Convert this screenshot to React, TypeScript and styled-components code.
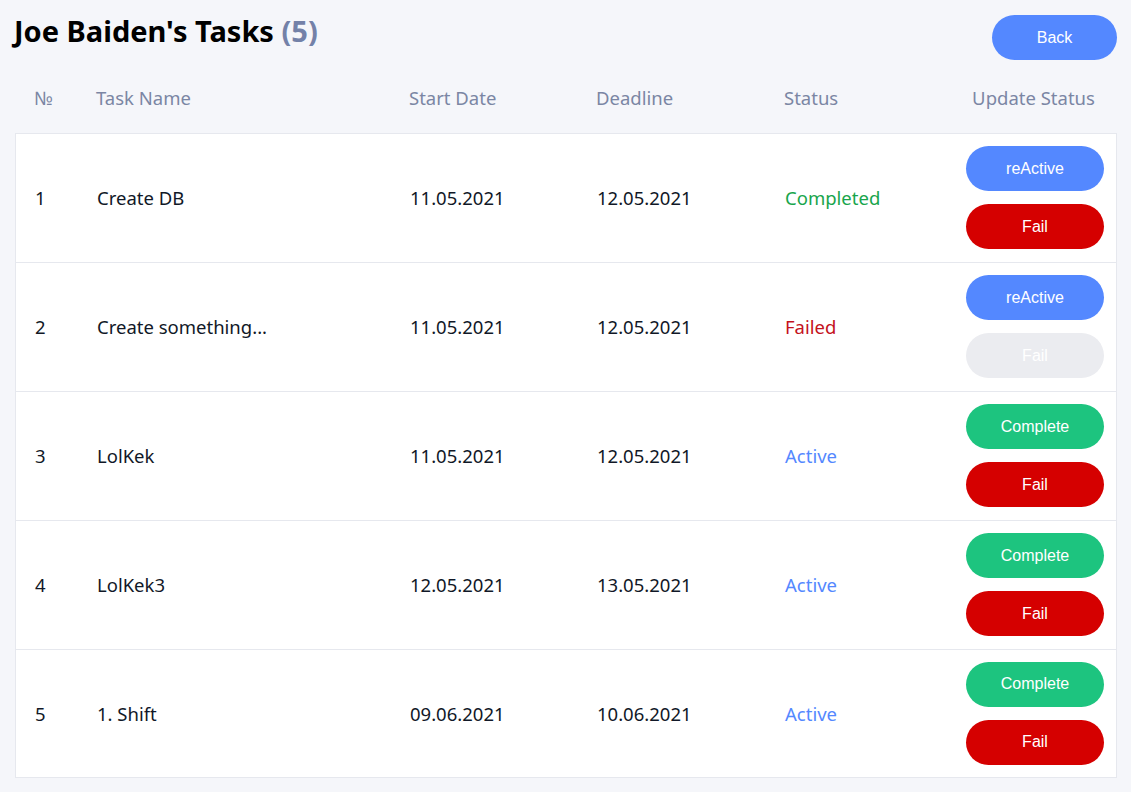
import React from "react";
import styled, { createGlobalStyle } from "styled-components";

const GlobalStyle = createGlobalStyle`
  html, body { margin: 0; padding: 0; background: #f5f6fa; }
  body { font-family: "Noto Sans", "Open Sans", sans-serif; }
  * { box-sizing: border-box; }
`;

const Page = styled.div`
  padding: 15px 14px 14px 15px;
  background: #f5f6fa;
  min-height: 792px;
`;

const TopBar = styled.div`
  display: flex;
  justify-content: space-between;
  align-items: flex-start;
  height: 45px;
`;

const Title = styled.h1`
  margin: -4px 0 0 -1px;
  font-family: "Noto Sans", sans-serif;
  font-size: 29px;
  font-weight: 700;
  color: #000;
  line-height: 40px;
`;

const Count = styled.span`
  color: #7381a8;
`;

const PillButton = styled.button<{ $variant: "blue" | "green" | "red" | "disabled" }>`
  height: 45px;
  border: none;
  border-radius: 23px;
  font-family: "Liberation Sans", Arial, sans-serif;
  font-size: 16px;
  color: #fff;
  cursor: ${(p) => (p.$variant === "disabled" ? "default" : "pointer")};
  background: ${(p) =>
    p.$variant === "blue"
      ? "#5488ff"
      : p.$variant === "green"
      ? "#1dc47f"
      : p.$variant === "red"
      ? "#d50000"
      : "#ebecf0"};
`;

const BackButton = styled(PillButton)`
  width: 125px;
`;

const Columns = styled.div`
  display: grid;
  grid-template-columns: 62px 313px 187px 188px 1fr 138px;
  align-items: center;
  padding: 0 12px 0 19px;
`;

const HeaderRow = styled(Columns)`
  height: 73px;
  padding-top: 2px;
  color: #7b86a4;
  font-size: 18.5px;
`;

const HeaderCell = styled.div<{ $center?: boolean }>`
  text-align: ${(p) => (p.$center ? "center" : "left")};
  padding-right: ${(p) => (p.$center ? "5px" : "0")};
  white-space: nowrap;
`;

const Table = styled.div`
  background: #fff;
  border: 1px solid #e6e8ee;
`;

const Row = styled(Columns)`
  height: 129px;
  padding-bottom: 1px;
  border-top: 1px solid #e6e8ee;
  &:first-child { border-top: none; height: 128px; }
  &:last-child { height: 128px; }
  color: #111827;
  font-size: 18.5px;
`;

const Cell = styled.div`
  white-space: nowrap;
`;

type Status = "Completed" | "Failed" | "Active";

const StatusText = styled.div<{ $status: Status }>`
  color: ${(p) =>
    p.$status === "Completed" ? "#18a54c" : p.$status === "Failed" ? "#c4121c" : "#5488ff"};
`;

const Actions = styled.div`
  display: flex;
  flex-direction: column;
  gap: 13px;
`;

const tasks: { n: number; name: string; start: string; end: string; status: Status }[] = [
  { n: 1, name: "Create DB", start: "11.05.2021", end: "12.05.2021", status: "Completed" },
  { n: 2, name: "Create something...", start: "11.05.2021", end: "12.05.2021", status: "Failed" },
  { n: 3, name: "LolKek", start: "11.05.2021", end: "12.05.2021", status: "Active" },
  { n: 4, name: "LolKek3", start: "12.05.2021", end: "13.05.2021", status: "Active" },
  { n: 5, name: "1. Shift", start: "09.06.2021", end: "10.06.2021", status: "Active" },
];

export default function App() {
  return (
    <Page>
      <GlobalStyle />
      <TopBar>
        <Title>
          Joe Baiden's Tasks <Count>(5)</Count>
        </Title>
        <BackButton $variant="blue">Back</BackButton>
      </TopBar>
      <HeaderRow>
        <HeaderCell>№</HeaderCell>
        <HeaderCell>Task Name</HeaderCell>
        <HeaderCell>Start Date</HeaderCell>
        <HeaderCell>Deadline</HeaderCell>
        <HeaderCell>Status</HeaderCell>
        <HeaderCell $center>Update Status</HeaderCell>
      </HeaderRow>
      <Table>
        {tasks.map((t) => (
          <Row key={t.n}>
            <Cell>{t.n}</Cell>
            <Cell>{t.name}</Cell>
            <Cell>{t.start}</Cell>
            <Cell>{t.end}</Cell>
            <StatusText $status={t.status}>{t.status}</StatusText>
            <Actions>
              {t.status === "Active" ? (
                <PillButton $variant="green">Complete</PillButton>
              ) : (
                <PillButton $variant="blue">reActive</PillButton>
              )}
              <PillButton $variant={t.status === "Failed" ? "disabled" : "red"}>Fail</PillButton>
            </Actions>
          </Row>
        ))}
      </Table>
    </Page>
  );
}
